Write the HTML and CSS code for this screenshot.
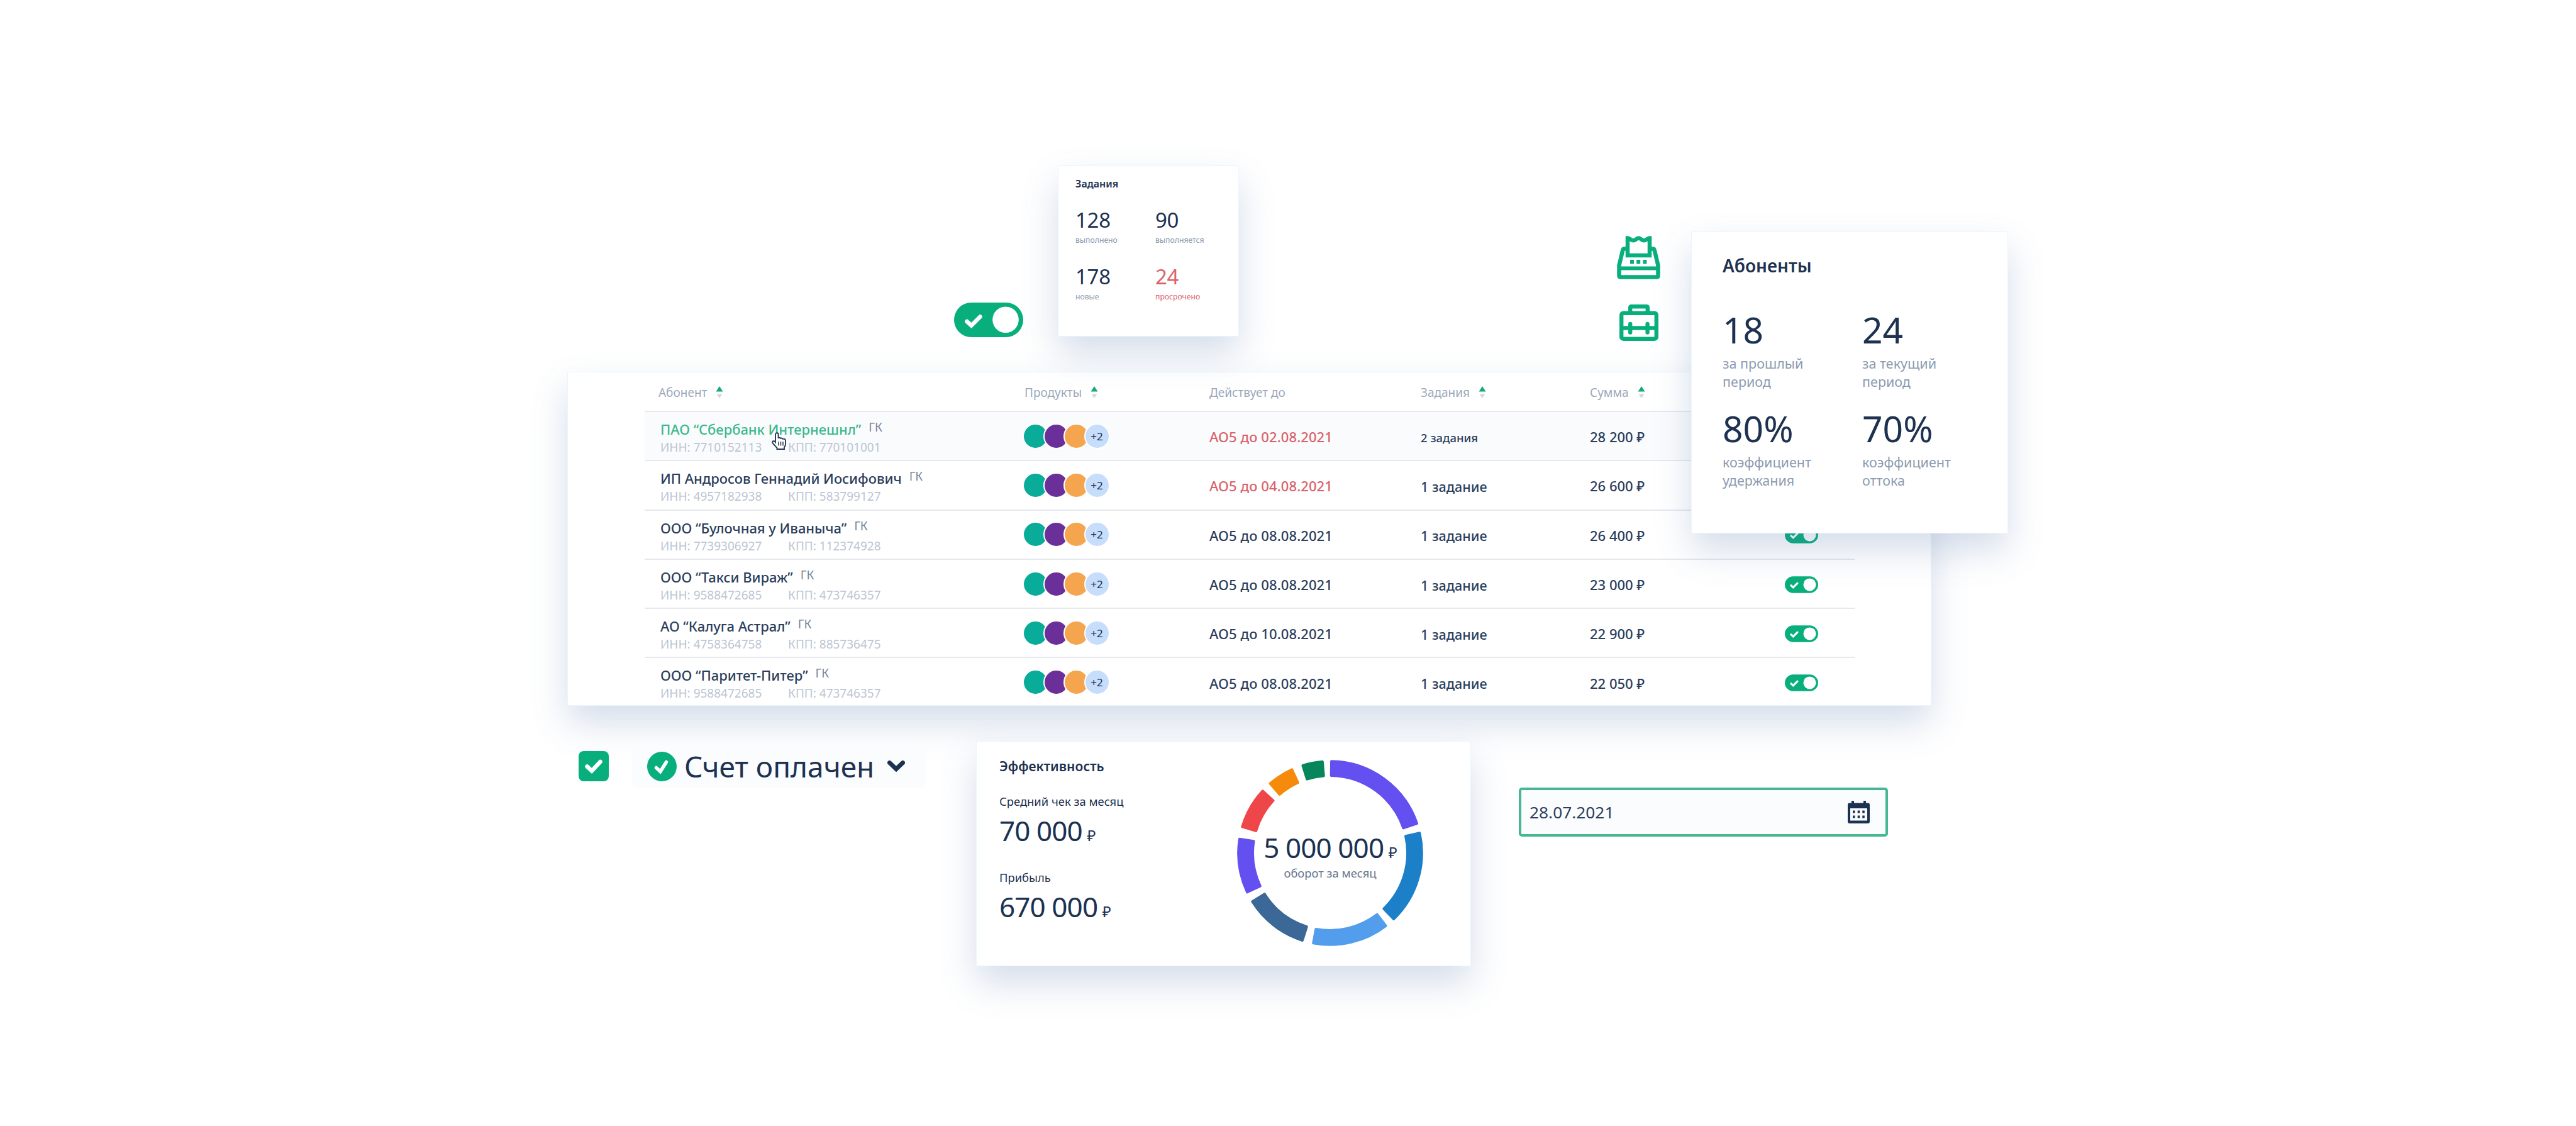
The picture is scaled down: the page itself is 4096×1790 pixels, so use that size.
FILE: index.html
```html
<!DOCTYPE html>
<html lang="ru">
  <head>
    <meta charset="UTF-8" />
    <title>Абоненты</title>
    <link rel="stylesheet" href="styles.css" />
  </head>
  <body>
    <svg class="sprite">
      <symbol id="toggle" viewBox="0 0 110 55">
        <rect width="110" height="55" rx="27.5" fill="#08af7c" />
        <circle cx="82" cy="27.3" r="20.8" fill="#fff" />
        <path d="M20.500 30l7 6.500L41.500 22.500" fill="none" stroke="#fff" stroke-width="6.5" stroke-linecap="round" />
      </symbol>
      <symbol id="sort" viewBox="0 0 12 20">
        <path d="M6 0l5.5 8.5H.5z" fill="#16a97b" />
        <path d="M1.5 12.5h9L6 19z" fill="#d3d8df" />
      </symbol>
    </svg>

    <main class="scene">
      <section class="top">
        <svg class="toggle-big"><use href="#toggle" /></svg>

        <article class="card tasks">
          <h2>Задания</h2>
          <div class="stats">
            <div><b>128</b><p>выполнено</p></div>
            <div><b>90</b><p>выполняется</p></div>
            <div><b>178</b><p>новые</p></div>
            <div class="late"><b>24</b><p>просрочено</p></div>
          </div>
        </article>

        <div class="icons">
          <svg class="register" viewBox="0 0 69 69" fill="none" stroke="#08af7c" stroke-width="6.5" stroke-linejoin="round">
            <path d="M17 31V3.500c4 0 4.500 3.800 9 3.800s4.500-3.800 8.500-3.800 4 3.800 8.500 3.800 5-3.800 9-3.800V31z" stroke-linejoin="miter" />
            <path d="M14 20.500h-2.500q-1.800 0-2.300 2.500L3.500 47v16q0 2.500 2.500 2.500h57q2.500 0 2.500-2.500V47l-5.700-24q-.5-2.500-2.300-2.500H55" />
            <path d="M3 51.500h63" stroke-width="6" />
            <path d="M21 41.200h6M31.200 41.200h6M41.400 41.200h6" />
          </svg>
          <svg class="briefcase" viewBox="0 0 62 58" fill="none" stroke="#08af7c" stroke-width="6.400">
            <rect x="3.200" y="13.700" width="55.600" height="41" rx="3" />
            <path d="M17.200 14V5q0-1.800 1.800-1.800h24q1.800 0 1.800 1.800V14M3 37.500h56" />
            <path d="M17.200 31v13.500M44.600 31v13.500" stroke-linecap="round" />
          </svg>
        </div>
      </section>

      <section class="card table">
        <header class="row head">
          <span>Абонент <svg><use href="#sort" /></svg></span>
          <span>Продукты <svg><use href="#sort" /></svg></span>
          <span>Действует до</span>
          <span>Задания <svg><use href="#sort" /></svg></span>
          <span>Сумма <svg><use href="#sort" /></svg></span>
        </header>
        <div id="rows"></div>
        <svg class="hand" viewBox="0 0 26 28">
          <path d="M7 16V3.500a2.300 2.300 0 0 1 4.600 0V9q2-1 3.700.8 2-.8 3.500 1 3.500-.8 4.200 2.200V19q0 3-2 5v3H9.500v-2L3 18q-2-3.500 1-4 1.500 0 3 2z" fill="#fff" stroke="#27364f" stroke-width="1.900" />
          <path d="M12 15v6.500M15.500 15v6.500M19 15v6.500" stroke="#27364f" stroke-width="1.500" />
        </svg>
      </section>

      <template>
        <div class="row">
          <div class="client">
            <p><span class="name"></span><i>ГК</i></p>
            <p class="codes"><span class="inn"></span><span class="kpp"></span></p>
          </div>
          <div class="dots"><u></u><u></u><u></u><u>+2</u></div>
          <span class="until"></span>
          <span class="count"></span>
          <span class="sum"></span>
          <svg class="toggle"><use href="#toggle" /></svg>
        </div>
      </template>

      <section class="bottom">
        <svg class="checkbox" viewBox="0 0 48 48">
          <rect width="48" height="48" rx="8" fill="#08af7c" />
          <path d="M13.500 24.500l7.500 7L34.500 17" fill="none" stroke="#fff" stroke-width="6.500" stroke-linecap="round" />
        </svg>

        <div class="status">
          <svg class="paid" viewBox="0 0 47 47">
            <circle cx="23.500" cy="23.500" r="23.500" fill="#08af7c" />
            <path d="M14.500 25.500l6.500 6L30.500 16.500" fill="none" stroke="#fff" stroke-width="5.500" stroke-linecap="round" />
          </svg>
          <span>Счет оплачен</span>
          <svg class="chevron" viewBox="0 0 28 18">
            <path d="M3.500 3.500L14 13.500 24.500 3.500" fill="none" stroke="#1d3150" stroke-width="7" stroke-linecap="round" />
          </svg>
        </div>

        <article class="card effect">
          <div class="money">
            <h2>Эффективность</h2>
            <p>Средний чек за месяц</p>
            <b>70 000 <small>₽</small></b>
            <p>Прибыль</p>
            <b>670 000 <small>₽</small></b>
          </div>
          <div class="donut">
            <svg id="ring" viewBox="-148 -148 296 296"></svg>
            <div class="total">
              <b>5 000 000 <small>₽</small></b>
              <p>оборот за месяц</p>
            </div>
          </div>
        </article>

        <div class="date">
          <span>28.07.2021</span>
          <svg viewBox="0 0 35 36">
            <path d="M3 3.500h3V0h4v3.500h15V0h4v3.500h3q3 0 3 3V33q0 3-3 3H3q-3 0-3-3V6.500q0-3 3-3z" fill="#1d3150" />
            <path d="M4 12h27v19.500H4z" fill="#fbfcfe" />
            <path d="M8 15.500h3.500v4H8zM15.700 15.500h3.500v4h-3.500zM23.300 15.500h3.500v4h-3.500zM8 23.500h3.500v4H8zM15.700 23.500h3.500v4h-3.500zM23.300 23.500h3.500v4h-3.500z" fill="#1d3150" />
          </svg>
        </div>
      </section>

      <article class="card subscribers">
        <h2>Абоненты</h2>
        <div class="stats">
          <div><b>18</b><p>за прошлый<br />период</p></div>
          <div><b>24</b><p>за текущий<br />период</p></div>
          <div><b>80%</b><p>коэффициент<br />удержания</p></div>
          <div><b>70%</b><p>коэффициент<br />оттока</p></div>
        </div>
      </article>
    </main>

    <script>
      const clients = [
        ["ПАО “Сбербанк Интернешнл”", "7710152113", "770101001", "02.08.2021", "2 задания", "28 200"],
        ["ИП Андросов Геннадий Иосифович", "4957182938", "583799127", "04.08.2021", "1 задание", "26 600"],
        ["ООО “Булочная у Иваныча”", "7739306927", "112374928", "08.08.2021", "1 задание", "26 400"],
        ["ООО “Такси Вираж”", "9588472685", "473746357", "08.08.2021", "1 задание", "23 000"],
        ["АО “Калуга Астрал”", "4758364758", "885736475", "10.08.2021", "1 задание", "22 900"],
        ["ООО “Паритет-Питер”", "9588472685", "473746357", "08.08.2021", "1 задание", "22 050"],
      ];
      const template = document.querySelector("template");

      clients.forEach(([name, inn, kpp, until, count, sum], i) => {
        const klon = template.content.cloneNode(true);
        klon.querySelector(".name").textContent = name;
        klon.querySelector(".inn").textContent = "ИНН: " + inn;
        klon.querySelector(".kpp").textContent = "КПП: " + kpp;
        klon.querySelector(".until").textContent = "АО5 до " + until;
        klon.querySelector(".count").textContent = count;
        klon.querySelector(".sum").textContent = sum + " ₽";
        if (i == 0) klon.querySelector(".row").classList.add("active");
        if (i < 2) klon.querySelector(".until").classList.add("overdue");
        document.querySelector("#rows").appendChild(klon);
      });

      // start angle, end angle, colour; clockwise from the top
      const parts = [
        [0, 72, "#644ff0"],
        [76.6, 136.9, "#1c80c9"],
        [141.8, 191.4, "#529dec"],
        [196.8, 238.8, "#3b6896"],
        [243.9, 279.6, "#644ff0"],
        [285.8, 313.4, "#ef4649"],
        [318.4, 336.2, "#f58a0b"],
        [341.8, 356, "#07865c"],
      ];
      const point = (r, deg) => {
        const a = (deg * Math.PI) / 180;
        return (r * Math.sin(a)).toFixed(2) + " " + (-r * Math.cos(a)).toFixed(2);
      };

      parts.forEach(([from, to, color]) => {
        const a = from + 0.8;
        const b = to - 0.8;
        const path = document.createElementNS("http://www.w3.org/2000/svg", "path");
        path.setAttribute(
          "d",
          `M${point(145.8, a)}A145.8 145.8 0 0 1 ${point(145.8, b)}L${point(123, b)}A123 123 0 0 0 ${point(123, a)}Z`
        );
        path.setAttribute("fill", color);
        path.setAttribute("stroke", color);
        ring.appendChild(path);
      });
    </script>
  </body>
</html>
```
FILE: styles.css
```css
* {
  margin: 0;
  box-sizing: border-box;
}

body {
  background-color: #fff;
  color: #1d3150;
  font-family: "Noto Sans", sans-serif;
}

svg {
  display: block;
  flex: none;
}

b,
i,
u,
small {
  font-weight: 400;
  font-style: normal;
  text-decoration: none;
}

.sprite {
  position: absolute;
  width: 0;
  height: 0;
}

.scene {
  position: relative;
  width: 4096px;
  height: 1790px;
  overflow: hidden;
}

.card {
  background-color: #fff;
  border: 1px solid #e9f6fd;
  box-shadow: 0 27px 54px rgba(74, 108, 165, 0.23);
}

h2 {
  font-weight: 600;
}

p,
b,
span {
  white-space: nowrap;
}

/* top row */

.top {
  position: relative;
  z-index: 1;
  display: flex;
  align-items: flex-start;
  height: 591px;
  padding-left: 1517px;
}

.toggle-big {
  width: 110px;
  height: 55px;
  margin-top: 481px;
}

.tasks {
  width: 288px;
  height: 272px;
  margin: 263px 0 0 55px;
  padding: 16px 0 0 27px;
}

.tasks h2 {
  font-size: 16px;
  line-height: 24px;
}

.stats {
  display: grid;
}

.tasks .stats {
  grid-template-columns: 127px 127px;
  grid-auto-rows: 89.7px;
  margin-top: 25px;
}

.tasks b {
  display: block;
  font-size: 33px;
  line-height: 42px;
  letter-spacing: -0.3px;
}

.tasks p {
  margin-top: 3px;
  font-size: 12.2px;
  line-height: 16px;
  color: #8c9bb0;
}

.tasks .late b,
.tasks .late p {
  color: #d9636a;
}

.icons {
  margin: 375px 0 0 601px;
}

.register {
  width: 69px;
  height: 69px;
}

.briefcase {
  width: 62px;
  height: 58px;
  margin: 40px 0 0 4px;
}

/* table */

.table {
  position: relative;
  width: 2169px;
  height: 531px;
  margin-left: 902px;
  padding-left: 122px;
}

.row {
  display: grid;
  grid-template-columns: 604px 294px 336px 269px 310px 111px;
  align-items: center;
  width: 1924px;
  height: 78.3px;
  border-bottom: 2px solid #e6e8ee;
  font-size: 22px;
}

#rows {
  color: #2b3e5c;
}

#rows .row:last-child {
  border-color: transparent;
}

.head {
  height: 63px;
  padding-top: 2px;
  font-size: 19px;
  color: #9ba8bb;
}

.head span {
  display: flex;
  align-items: center;
}

.head span:first-child {
  padding-left: 22px;
}

.head svg {
  width: 12px;
  height: 20px;
  margin-left: 14px;
}

.active {
  background-color: #fafbfd;
}

.client {
  align-self: start;
  padding: 13px 0 0 25px;
}

.client p {
  display: flex;
  line-height: 28px;
}

.name {
  font-weight: 500;
  letter-spacing: -0.05px;
}

.active .name {
  color: #3bb88c;
}

.client i {
  margin-left: 12px;
  font-size: 19px;
  line-height: 22px;
  color: #76849a;
}

.client .codes {
  margin-top: 1px;
  font-size: 19px;
  color: #bcc5d3;
}

.inn {
  width: 203px;
}

.dots {
  display: flex;
  margin-left: -3px;
}

.dots u {
  width: 41px;
  height: 41px;
  margin-right: -8.5px;
  border: 2px solid #fff;
  border-radius: 50%;
  background-color: #09ab99;
  color: #1d3150;
  font-size: 17px;
  line-height: 38px;
  text-align: center;
}

.dots u:nth-child(2) {
  background-color: #6b2f99;
}

.dots u:nth-child(3) {
  background-color: #f6a54f;
}

.dots u:nth-child(4) {
  background-color: #c6ddfc;
}

.until,
.count,
.sum {
  padding-top: 2px;
  font-weight: 500;
}

.until {
  letter-spacing: 0.1px;
}

.count {
  padding-top: 4px;
  font-size: 21.5px;
}

.overdue {
  color: #d9636a;
}

.active .count {
  font-size: 18.5px;
}

.toggle {
  width: 53px;
  height: 27px;
  margin-top: 2px;
}

.hand {
  position: absolute;
  left: 323px;
  top: 95px;
  width: 26px;
  height: 28px;
}

/* bottom row */

.bottom {
  position: relative;
  display: flex;
  align-items: flex-start;
  padding-left: 920px;
}

.checkbox {
  width: 48px;
  height: 48px;
  margin-top: 72px;
}

.status {
  display: flex;
  align-items: center;
  width: 467px;
  height: 68px;
  margin: 62px 0 0 37px;
  padding-left: 24px;
  border-radius: 8px;
  background-color: #fafcfe;
}

.paid {
  width: 47px;
  height: 47px;
}

.status span {
  flex: none;
  width: 335px;
  padding-left: 12px;
  font-size: 46px;
  line-height: 60px;
}

.chevron {
  width: 28px;
  height: 18px;
}

.effect {
  display: flex;
  width: 787px;
  height: 358px;
  margin: 56px 0 0 80px;
  padding: 26px 0 0 36px;
}

.money {
  width: 378px;
}

.effect h2 {
  font-size: 21px;
  line-height: 26px;
}

.effect p {
  margin-top: 28px;
  font-size: 18.4px;
  line-height: 26px;
}

.effect h2 + p {
  margin-top: 30px;
}

.effect b {
  display: block;
  height: 68px;
  margin-top: -1px;
  font-size: 44px;
  line-height: 68px;
  letter-spacing: -0.9px;
}

.effect small {
  margin-left: -3px;
  font-size: 24px;
  line-height: 1;
}

.donut {
  position: relative;
  padding-top: 3px;
}

#ring {
  width: 296px;
  height: 296px;
  stroke-width: 4;
  stroke-linejoin: round;
}

.total {
  position: absolute;
  left: 0;
  top: 109px;
  width: 296px;
  text-align: center;
}

.effect .total p {
  margin-top: -6px;
  color: #66758c;
}

.date {
  display: flex;
  justify-content: space-between;
  align-items: center;
  width: 587px;
  height: 78px;
  margin: 130px 0 0 76px;
  padding: 0 25px 0 13px;
  border: 4px solid #45b893;
  border-radius: 5px;
  background-color: #fbfcfe;
  color: #2b3e5c;
  font-size: 26.3px;
}

.date svg {
  width: 35px;
  height: 36px;
}

/* subscribers card lies over the table */

.subscribers {
  position: absolute;
  z-index: 2;
  left: 2689px;
  top: 368px;
  width: 504px;
  height: 480px;
  padding: 35px 0 0 49px;
}

.subscribers h2 {
  font-size: 28px;
  line-height: 36px;
}

.subscribers .stats {
  grid-template-columns: 222px 222px;
  grid-auto-rows: 157px;
  margin-top: 49px;
}

.subscribers b {
  display: block;
  font-size: 57px;
  line-height: 70px;
}

.subscribers p {
  margin-top: 4px;
  font-size: 21.5px;
  line-height: 29.3px;
  color: #8c9bb0;
}
```
